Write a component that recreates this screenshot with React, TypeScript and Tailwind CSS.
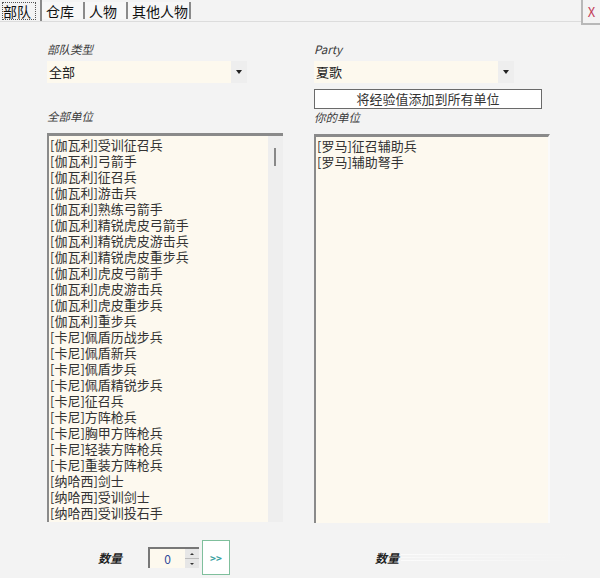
const allUnits = [
  "[伽瓦利]受训征召兵",
  "[伽瓦利]弓箭手",
  "[伽瓦利]征召兵",
  "[伽瓦利]游击兵",
  "[伽瓦利]熟练弓箭手",
  "[伽瓦利]精锐虎皮弓箭手",
  "[伽瓦利]精锐虎皮游击兵",
  "[伽瓦利]精锐虎皮重步兵",
  "[伽瓦利]虎皮弓箭手",
  "[伽瓦利]虎皮游击兵",
  "[伽瓦利]虎皮重步兵",
  "[伽瓦利]重步兵",
  "[卡尼]佩盾历战步兵",
  "[卡尼]佩盾新兵",
  "[卡尼]佩盾步兵",
  "[卡尼]佩盾精锐步兵",
  "[卡尼]征召兵",
  "[卡尼]方阵枪兵",
  "[卡尼]胸甲方阵枪兵",
  "[卡尼]轻装方阵枪兵",
  "[卡尼]重装方阵枪兵",
  "[纳哈西]剑士",
  "[纳哈西]受训剑士",
  "[纳哈西]受训投石手",
];

const myUnits = ["[罗马]征召辅助兵", "[罗马]辅助弩手"];

const tabs = [
  { name: "部队", w: "w-[42px]" },
  { name: "仓库", w: "w-[43px]" },
  { name: "人物", w: "w-[43px]" },
  { name: "其他人物", w: "w-[63px]" },
];

function Label({ children }: { children: React.ReactNode }) {
  return <div className="h-[16px] text-[11.5px] leading-[16px] italic text-[#3a3a3a]">{children}</div>;
}

function Select({ value }: { value: string }) {
  return (
    <div className="flex h-[22px] w-[200px] items-center bg-[#fdf9ee]">
      <span className="flex-1 pl-[2px] text-[13px] text-[#222]">{value}</span>
      <span className="flex h-full w-[16px] items-center justify-center bg-[#eeeeee]">
        <svg width="6" height="4" viewBox="0 0 6 4">
          <path d="M0 0h6L3 4z" fill="#222" />
        </svg>
      </span>
    </div>
  );
}

function UnitList({ items }: { items: string[] }) {
  return (
    <div className="flex-1 pl-[1px] pt-[1px]">
      {items.map((u) => (
        <div key={u} className="h-[16px] whitespace-nowrap text-[13px] leading-[16px] text-[#333]">
          {u}
        </div>
      ))}
    </div>
  );
}

export default function App() {
  return (
    <div
      className="flex h-[578px] w-[600px] flex-col overflow-hidden bg-[#f3f3f3] text-[#2a2a2a]"
      style={{ fontFamily: '"Noto Sans CJK SC", "Liberation Sans", sans-serif' }}
    >
      {/* Tabs */}
      <div className="flex h-[22px] items-stretch border-b border-[#dcdcdc]">
        {tabs.map((t, i) => (
          <div
            key={t.name}
            className={
              i === 0
                ? `flex h-[21px] ${t.w} items-center border-r-2 border-[#8a8a8a] bg-[#f3f3f3] pl-[2px]`
                : `my-[2px] flex ${t.w} items-center border-r-2 border-[#8a8a8a] bg-[#f7f7f7] pl-[4px]`
            }
          >
            <span
              className={
                i === 0
                  ? "border border-dotted border-[#555] pr-[4px] text-[14px] leading-[16px] text-[#111]"
                  : "text-[14px] leading-[16px] text-[#111]"
              }
            >
              {t.name}
            </span>
          </div>
        ))}
        <div className="flex-1" />
        <div className="flex h-[25px] w-[19px] items-center justify-center border-b-2 border-l-2 border-[#b8b8b8] bg-[#f3f3f3] text-[13px] text-[#c2405a]">
          X
        </div>
      </div>

      {/* Body */}
      <div className="flex gap-[31px] pl-[47px] pt-[19px]">
        {/* Left column */}
        <div className="flex w-[236px] flex-col">
          <Label>部队类型</Label>
          <div className="mt-[4px]">
            <Select value="全部" />
          </div>
          <div className="h-[25px]" />
          <Label>全部单位</Label>
          <div className="mt-[9px] flex h-[389px] border-l-2 border-t-[3px] border-[#8a8a8a] bg-[#fdf9ef]">
            <UnitList items={allUnits} />
            <div className="w-[15px] bg-[#eeeeee] pl-[6px] pt-[12px]">
              <div className="h-[18px] w-[2px] bg-[#888]" />
            </div>
          </div>
        </div>

        {/* Right column */}
        <div className="flex w-[236px] flex-col">
          <Label>Party</Label>
          <div className="mt-[4px]">
            <Select value="夏歌" />
          </div>
          <button className="mt-[6px] h-[20px] w-[228px] border border-[#6a6a6a] bg-white text-[13px] leading-[16px] text-[#333]">
            将经验值添加到所有单位
          </button>
          <Label>你的单位</Label>
          <div className="mt-[9px] flex h-[389px] border-l-2 border-r-2 border-t-[3px] border-l-[#8a8a8a] border-r-[#fafafa] border-t-[#8a8a8a] bg-[#fdf9ef]">
            <UnitList items={myUnits} />
          </div>
        </div>
      </div>

      {/* Bottom row */}
      <div className="mt-[17px] flex pl-[47px]">
        <div className="flex w-[236px] items-center">
          <span className="ml-[51px] w-[50px] text-[12px] font-bold italic text-[#222]">数量</span>
          <div className="flex h-[21px] w-[51px] border-l-2 border-t-2 border-[#777] bg-[#fdf9ee]">
            <span className="flex-1 text-center text-[12px] leading-[19px] text-[#2f4a9a]">0</span>
            <div className="flex w-[14px] flex-col bg-[#e6e6e6]">
              <div className="flex flex-1 items-center justify-center border-b border-[#bbb]">
                <svg width="4" height="2" viewBox="0 0 4 2">
                  <path d="M0 2h4L2 0z" fill="#333" />
                </svg>
              </div>
              <div className="flex flex-1 items-center justify-center">
                <svg width="4" height="2" viewBox="0 0 4 2">
                  <path d="M0 0h4L2 2z" fill="#333" />
                </svg>
              </div>
            </div>
          </div>
          <button className="ml-[3px] flex h-[35px] w-[28px] items-center justify-center border border-[#7fbf9c] bg-white text-[10px] font-bold text-[#3aa0a0]">
            &gt;&gt;
          </button>
        </div>
        <div className="ml-[31px] flex flex-1 items-center">
          <span className="ml-[61px] text-[12px] font-bold italic text-[#222]">数量</span>
          <div className="ml-[2px] flex w-[180px] flex-col gap-[2px]">
            <div className="h-[1px] bg-gradient-to-r from-white/70 to-transparent" />
            <div className="h-[1px] bg-gradient-to-r from-white/50 to-transparent" />
            <div className="h-[1px] bg-gradient-to-r from-white/70 to-transparent" />
          </div>
        </div>
      </div>
    </div>
  );
}
